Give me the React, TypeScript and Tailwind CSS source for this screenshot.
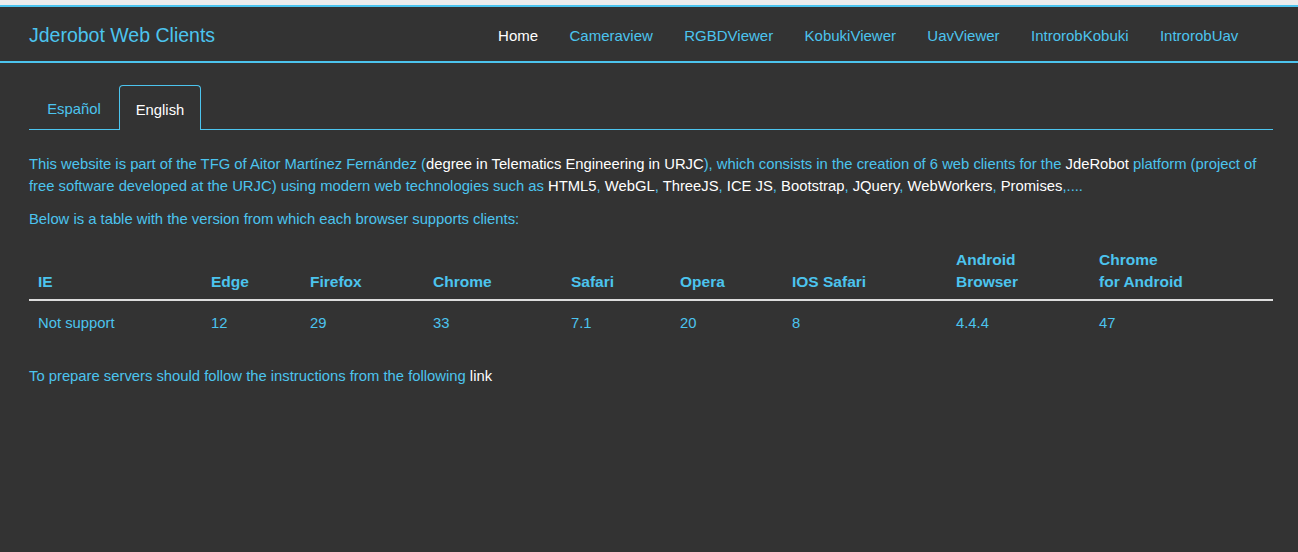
const navItems = ['Cameraview', 'RGBDViewer', 'KobukiViewer', 'UavViewer', 'IntrorobKobuki', 'IntrorobUav'];

const columns = [
  { head: ['IE'], value: 'Not support', w: 'w-[173px]' },
  { head: ['Edge'], value: '12', w: 'w-[99px]' },
  { head: ['Firefox'], value: '29', w: 'w-[123px]' },
  { head: ['Chrome'], value: '33', w: 'w-[138px]' },
  { head: ['Safari'], value: '7.1', w: 'w-[109px]' },
  { head: ['Opera'], value: '20', w: 'w-[112px]' },
  { head: ['IOS Safari'], value: '8', w: 'w-[164px]' },
  { head: ['Android', 'Browser'], value: '4.4.4', w: 'w-[143px]' },
  { head: ['Chrome', 'for Android'], value: '47', w: '' },
];

export default function App() {
  return (
    <div className="min-h-[552px] bg-[#333333] text-[14.8px] text-[#4cc4ee] font-['Liberation_Sans',Arial,sans-serif]">
      {/* top strip */}
      <div className="h-[5px] bg-[#ececec]" />

      {/* Navbar */}
      <nav className="h-[58px] pt-[4px] border-t-2 border-b-2 border-[#4cc4ee] bg-[#333333] px-[29px] flex items-center justify-between">
        <a className="text-[19.5px] leading-none">Jderobot Web Clients</a>
        <ul className="flex items-center mr-[15px] text-[15px]">
          <li className="px-[15.7px] text-white">Home</li>
          {navItems.map((item) => (
            <li key={item} className="px-[15.7px]">{item}</li>
          ))}
        </ul>
      </nav>

      <main className="px-[29px] pt-[22px] mr-[-4px]">
        {/* Tabs */}
        <ul className="flex border-b border-[#4cc4ee] h-[45px]">
          <li className="w-[90px] pt-[4px] flex items-center justify-center">Español</li>
          <li className="w-[82px] pt-[4px] -mb-px flex items-center justify-center border border-b-0 border-[#4cc4ee] rounded-t-[4px] bg-[#333333] text-white">
            English
          </li>
        </ul>

        <p className="mt-[23px] leading-[22px]">
          This website is part of the TFG of Aitor Martínez Fernández (
          <span className="text-white">degree in Telematics Engineering in URJC</span>), which consists in the creation
          of 6 web clients for the <span className="text-white">JdeRobot</span> platform (project of free software
          developed at the URJC) using modern web technologies such as <span className="text-white">HTML5</span>,{' '}
          <span className="text-white">WebGL</span>, <span className="text-white">ThreeJS</span>,{' '}
          <span className="text-white">ICE JS</span>, <span className="text-white">Bootstrap</span>,{' '}
          <span className="text-white">JQuery</span>, <span className="text-white">WebWorkers</span>,{' '}
          <span className="text-white">Promises</span>,....
        </p>
        <p className="mt-[11px] leading-[22px]">Below is a table with the version from which each browser supports clients:</p>

        {/* Browser table */}
        <table className="mt-[19px] w-full border-collapse">
          <thead>
            <tr className="border-b-2 border-[#dddddd]">
              {columns.map((c) => (
                <th key={c.value} className={`${c.w} px-[9px] pb-[6px] text-left align-bottom font-bold text-[15.5px] leading-[22px]`}>
                  {c.head.map((h) => (
                    <div key={h}>{h}</div>
                  ))}
                </th>
              ))}
            </tr>
          </thead>
          <tbody>
            <tr>
              {columns.map((c) => (
                <td key={c.value} className="px-[9px] pt-[12px] pb-[10px] leading-[20px]">{c.value}</td>
              ))}
            </tr>
          </tbody>
        </table>

        <p className="mt-[22px] leading-[22px]">
          To prepare servers should follow the instructions from the following <a className="text-white">link</a>
        </p>
      </main>
    </div>
  );
}
